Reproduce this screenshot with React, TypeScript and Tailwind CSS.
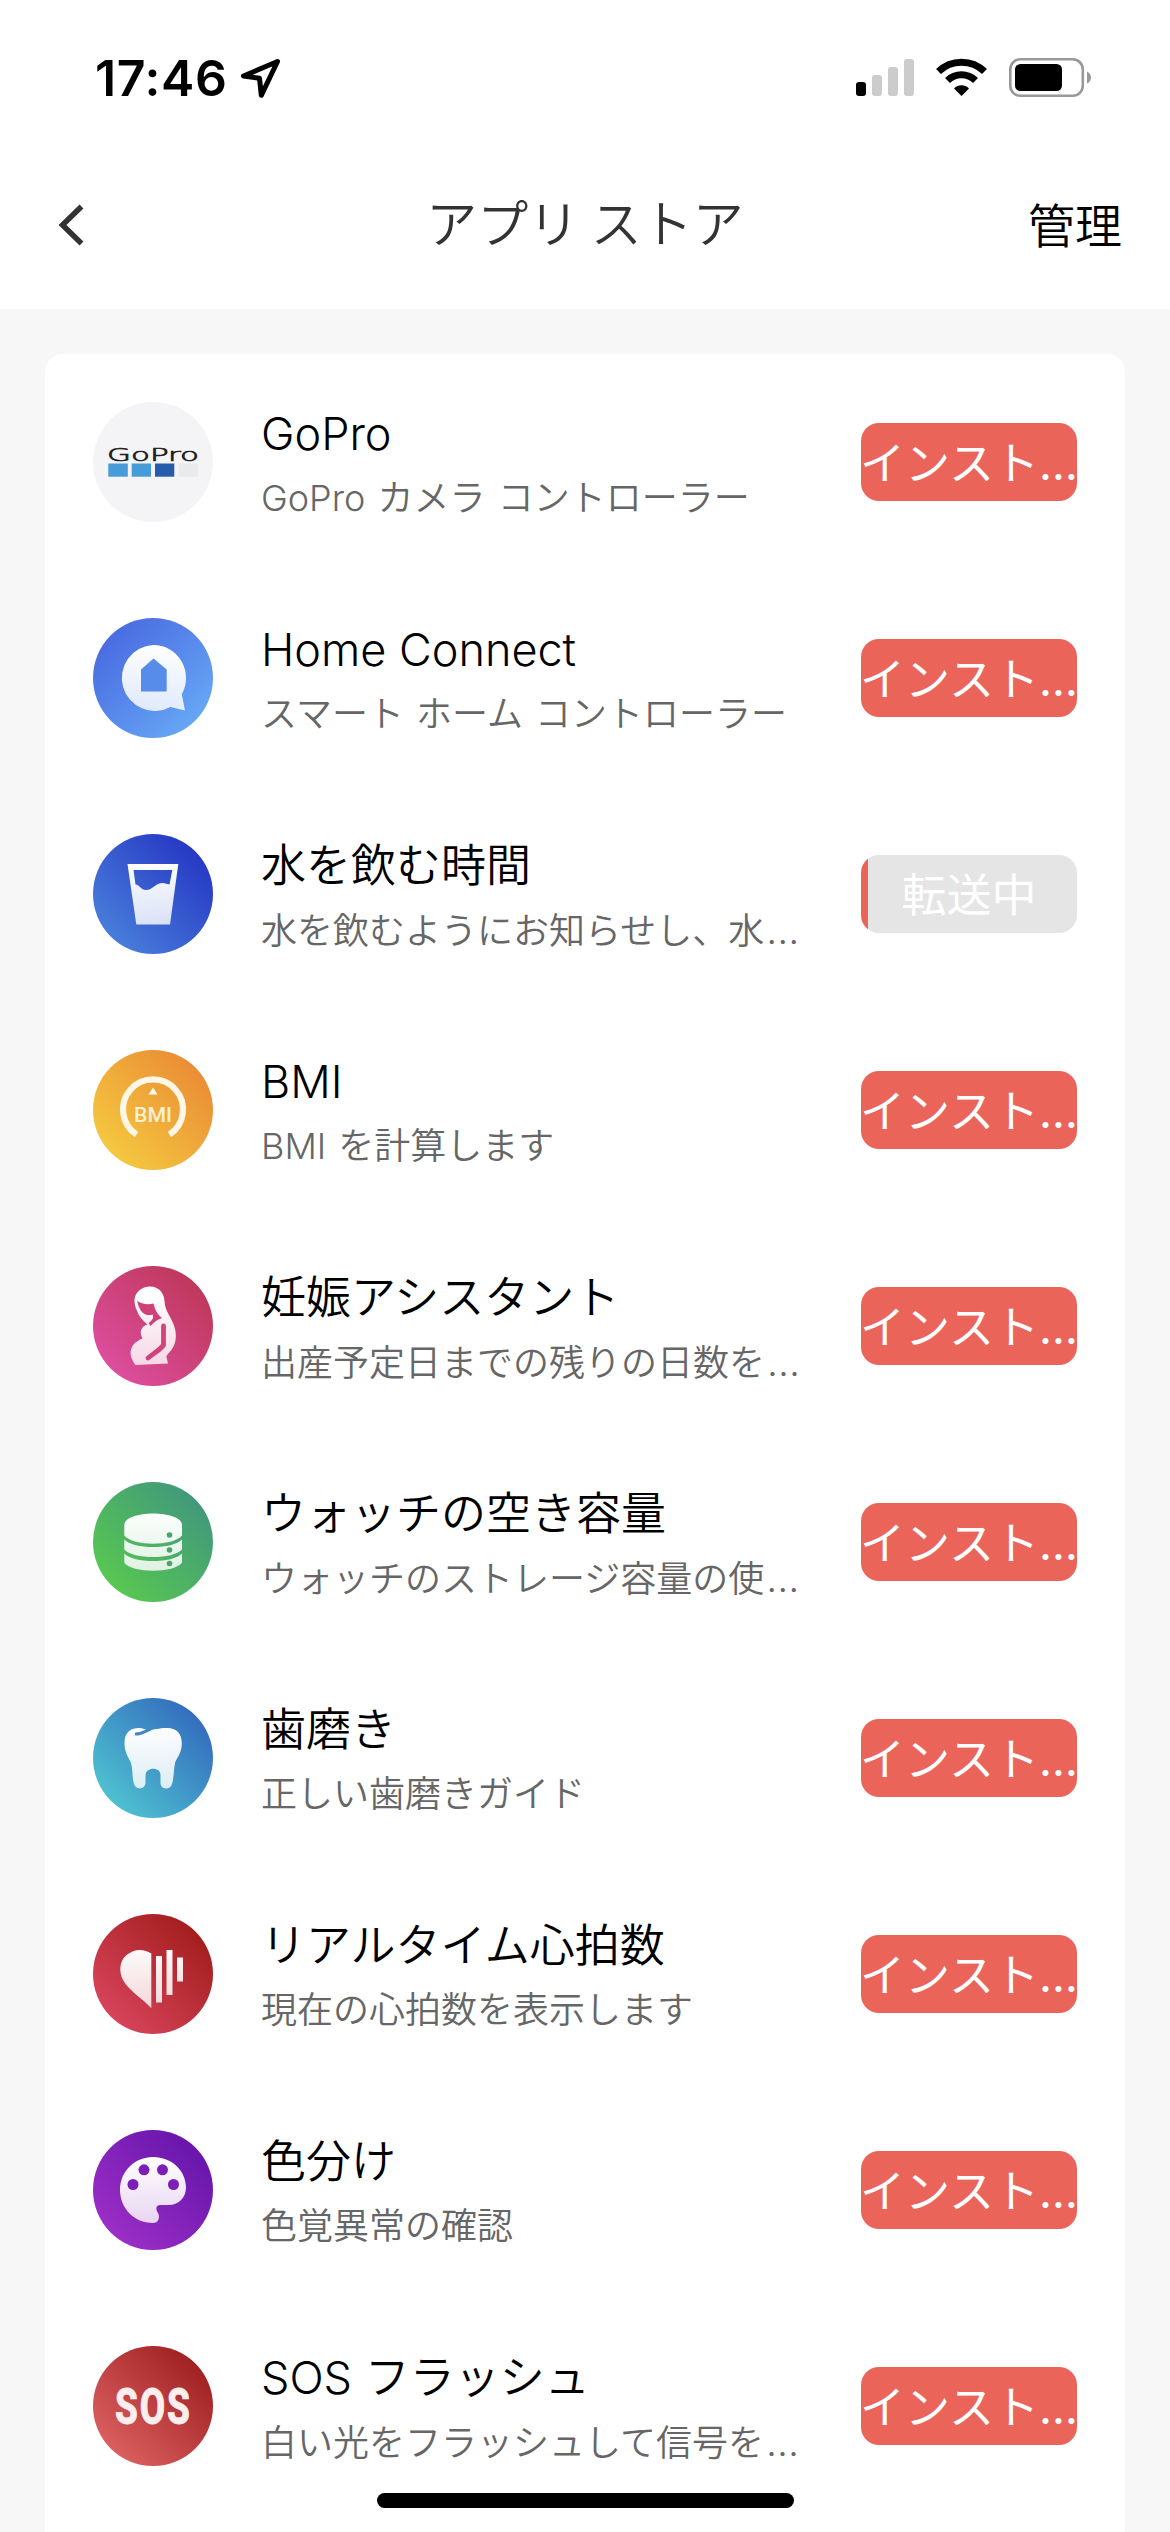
import React from "react";

type App = {
  name: string;
  desc: string;
  clipped?: boolean;
  from: string;
  to: string;
  falling?: boolean;
  glyph: React.ReactNode;
  progress?: number;
};

const W = "url(#sheen)";

const apps: App[] = [
  {
    name: "GoPro",
    desc: "GoPro カメラ コントローラー",
    from: "#f4f4f7",
    to: "#f4f4f7",
    glyph: (
      <g>
        <text
          x="14"
          y="58.700"
          textLength="92"
          lengthAdjust="spacingAndGlyphs"
          fontFamily="DejaVu Sans"
          fontSize="17.400"
          fill="#231f20"
          stroke="#231f20"
          strokeWidth="0.700"
        >
          GoPro
        </text>
        <rect x="15.300" y="61.500" width="19.500" height="13.200" fill="#469cd9" />
        <rect x="38.700" y="61.500" width="19.300" height="13.200" fill="#469cd9" />
        <rect x="62" y="61.500" width="19.300" height="13.200" fill="#265ca9" />
        <rect x="85.500" y="61.500" width="19.300" height="13.200" fill="#e9eaec" />
      </g>
    ),
  },
  {
    name: "Home Connect",
    desc: "スマート ホーム コントローラー",
    from: "#4767e0",
    to: "#68abf6",
    falling: true,
    glyph: (
      <g>
        <path fill={W} d="M60 27a33 33 0 0 1 28.800 49.200L92 92.500 77.500 89A33 33 0 1 1 60 27z" />
        <path fill="#588ceb" d="M60.500 40.500 73.700 51.500V73.500H48V51.500z" />
      </g>
    ),
  },
  {
    name: "水を飲む時間",
    desc: "水を飲むようにお知らせし、水",
    clipped: true,
    from: "#4b83dc",
    to: "#2433c3",
    progress: 3.3,
    glyph: (
      <path
        fill={W}
        fillRule="evenodd"
        d="M34.500 30H85.300L77 90.500H43.300zM40.500 36 42.500 50.500C46 50.500 48 56 53 56C60 56 62 49 70 49L76.500 50.500 79.300 36z"
      />
    ),
  },
  {
    name: "BMI",
    desc: "BMI を計算します",
    from: "#f6cd40",
    to: "#e98834",
    glyph: (
      <g>
        <path d="M43.500 84.500A30 30 0 1 1 76.500 84.500" fill="none" stroke="#fff6e6" strokeWidth="6.200" />
        <path d="M60 37.500 64.500 44.500H55.500z" fill="#fffaf0" />
        <text x="60" y="72.300" textAnchor="middle" textLength="38" lengthAdjust="spacingAndGlyphs" fontFamily="Roboto" fontWeight="500" fontSize="21" fill="#fdf0d4">
          BMI
        </text>
      </g>
    ),
  },
  {
    name: "妊娠アシスタント",
    desc: "出産予定日までの残りの日数を",
    clipped: true,
    from: "#df50a4",
    to: "#bd3655",
    glyph: (
      <g>
        <path
          fill={W}
          d="M41.500 34C42 26 49 20.500 57 20.500C66 20.500 71 27 71.500 35C72 44 76 48 80 57C84 66 84 76 79 83C76.500 87 73.500 88.500 73.500 91L75 97.500 42.500 99C38 93 36 87 39 81C41 76.500 46 74 49.500 72.500C46 66 48 60 54.500 58.500C49 54 46 50 44.500 46C43 42 41.500 40 41.500 34z"
        />
        <path fill="#d0417a" d="M44 35C48 38 55 39 60.500 37.500C62 43 63.500 48 69 52C64 53.500 61 56.500 57.500 60L55.500 57C60 54 61 51 59.500 48.500C56.500 49.500 53 49.500 49.500 46.500C46 43 45 38 44 35z" />
        <path d="M70.500 60V79C67 84 61 87 55 92" fill="none" stroke="#d0437c" strokeWidth="4.800" strokeLinecap="round" strokeLinejoin="round" />
      </g>
    ),
  },
  {
    name: "ウォッチの空き容量",
    desc: "ウォッチのストレージ容量の使",
    clipped: true,
    from: "#59cb4d",
    to: "#40957f",
    glyph: (
      <g fill={W}>
        <path d="M31.300 43C31.300 27.500 89 27.500 89 43V53.500C80 64.500 40 64.500 31.300 53.500z" />
        <path d="M31.300 57.500C40 67.500 80 67.500 89 57.500V67.500C80 77.500 40 77.500 31.300 67.500z" />
        <path d="M31.300 71.500C40 81.500 80 81.500 89 71.500V80.500C82 91.500 38 91.500 31.300 80.500z" />
        <g fill="#4ca36a">
          <circle cx="76.500" cy="53" r="2.800" />
          <circle cx="76.500" cy="68" r="2.800" />
          <circle cx="76.500" cy="81.500" r="2.800" />
        </g>
      </g>
    ),
  },
  {
    name: "歯磨き",
    desc: "正しい歯磨きガイド",
    from: "#50c8d2",
    to: "#3266bd",
    glyph: (
      <g>
        <path
          fill={W}
          d="M31.500 45C31.500 34 38 30 46 30C50 30 52 32 56 32C61 32 65 30 74 30C85 30 89 37 88.800 46C88.500 56 83 61 82 65C80.500 73 81 80 79 86C77.500 92 68.500 92 67.500 86V77C67.500 68.500 53 68.500 52.500 77V85C52 92 42.500 92 41 86C39 80 40 72 38 65C36 60 31.500 55 31.500 45z"
        />
        <path d="M42 36C48 36.500 52 33 58 31" fill="none" stroke="#3f86c6" strokeWidth="3" />
      </g>
    ),
  },
  {
    name: "リアルタイム心拍数",
    desc: "現在の心拍数を表示します",
    from: "#db4761",
    to: "#a01b18",
    glyph: (
      <g fill={W}>
        <path d="M58.300 39.500C50 34 40 35 33 41.500C26 48 26 58 30 66C36 77 49 84 58.300 94.300z" />
        <rect x="63" y="42" width="6" height="46.500" />
        <rect x="73.500" y="36" width="6" height="45" />
        <rect x="84" y="43.500" width="6" height="24" />
      </g>
    ),
  },
  {
    name: "色分け",
    desc: "色覚異常の確認",
    from: "#a030c8",
    to: "#6314aa",
    glyph: (
      <g>
        <path
          fill={W}
          d="M60 27C79 27 93 41 93 57.500C93 68 85 75 76 75H67.500C62 75 63 80 65 83C67.500 88 65 93 60 93C41 93 27 78 27 60C27 41 42 27 60 27z"
        />
        <g fill="#7c1fb6">
          <circle cx="51" cy="39.800" r="5.500" />
          <circle cx="69.500" cy="39.800" r="5.500" />
          <circle cx="40" cy="54.500" r="5.500" />
          <circle cx="80.500" cy="54.500" r="5.500" />
        </g>
      </g>
    ),
  },
  {
    name: "SOS フラッシュ",
    desc: "白い光をフラッシュして信号を",
    clipped: true,
    from: "#e06464",
    to: "#9c1c1e",
    glyph: (
      <g transform="translate(59.500 77.800) scale(0.730 1)">
        <text textAnchor="middle" letterSpacing="2.500" x="1.200" fontFamily="Roboto" fontWeight="800" fontSize="50.500" fill="#fbeeee" stroke="#fbeeee" strokeWidth="0.800">
          SOS
        </text>
      </g>
    ),
  },
];

function AppIcon({ app, id }: { app: App; id: string }) {
  return (
    <svg className="size-[120px] shrink-0" viewBox="0 0 120 120">
      <defs>
        <linearGradient id={id} x1="0.080" y1={app.falling ? "0.080" : "0.920"} x2="0.920" y2={app.falling ? "0.920" : "0.080"}>
          <stop offset="0" stopColor={app.from} />
          <stop offset="1" stopColor={app.to} />
        </linearGradient>
      </defs>
      <circle cx="60" cy="60" r="60" fill={`url(#${id})`} />
      {app.glyph}
    </svg>
  );
}

function StatusBar() {
  return (
    <div className="flex h-[141px] items-start justify-between pl-[95px] pr-[78px] pt-[58px]">
      <div className="flex items-center">
        <span className="font-['Inter'] text-[50px] font-semibold leading-[40px] tracking-[0.6px]">17:46</span>
        <svg className="ml-[12px] h-[40px] w-[42px]" viewBox="0 0 42 40" fill="none" stroke="#000" strokeWidth="5" strokeLinejoin="round">
          <path d="M37.500 3.500 3.500 18 19.500 20.300 21.300 37.300z" />
        </svg>
      </div>
      <svg className="h-[40px] w-[236px]" viewBox="0 0 236 40">
        <rect x="0" y="24" width="10" height="14" rx="3" />
        <g fill="#ccc">
          <rect x="16" y="17" width="10" height="21" rx="3" />
          <rect x="32" y="9" width="10" height="29" rx="3" />
          <rect x="48" y="1" width="10" height="37" rx="3" />
        </g>
        <g fill="none" stroke="#000" strokeWidth="7">
          <path d="M82.500 13.500A33 33 0 0 1 128.500 13.500" />
          <path d="M91.500 22.500A20 20 0 0 1 119.500 22.500" />
        </g>
        <path d="M105.500 38 98 30.500A10.500 10.500 0 0 1 113 30.500z" />
        <rect x="154.300" y="1.300" width="72.500" height="36.500" rx="10" fill="none" stroke="#999" strokeWidth="2.600" />
        <rect x="159" y="6" width="47" height="27" rx="5.500" />
        <path d="M231 13.500Q235 15.500 235 19.500T231 25.500z" fill="#999" />
      </svg>
    </div>
  );
}

export default function App() {
  return (
    <div className="relative h-[2532px] w-[1170px] overflow-hidden bg-[#f7f7f7] font-['Inter','Noto_Sans_CJK_JP',sans-serif] font-[350] text-black">
      <svg className="absolute size-0">
        <defs>
          <linearGradient id="sheen" gradientUnits="userSpaceOnUse" x1="0" y1="28" x2="0" y2="95">
            <stop offset="0" stopColor="#fff" />
            <stop offset="1" stopColor="#fff" stopOpacity="0.800" />
          </linearGradient>
        </defs>
      </svg>
      <header className="h-[309px] bg-white">
        <StatusBar />
        <nav className="grid h-[168px] grid-cols-3 items-center px-12 font-['Noto_Sans_CJK_JP',sans-serif]">
          <svg className="ml-[9px] h-[46px] w-[28px]" viewBox="0 0 28 46" fill="none" stroke="#333" strokeWidth="5.500">
            <path d="M24.500 4.500 5.500 23 24.500 41.500" />
          </svg>
          <h1 className="whitespace-nowrap pb-[8px] text-center text-[51px] leading-[72px] text-[#333]">アプリ ストア</h1>
          <span className="pb-[4px] text-right text-[47px] leading-[72px]">管理</span>
        </nav>
      </header>
      <main className="mx-[45px] mt-[45px] rounded-t-[18px] bg-white pb-12">
        {apps.map((app, i) => (
          <div key={app.name} className="flex h-[216px] items-center px-12">
            <AppIcon app={app} id={`disc-${i}`} />
            <div className="ml-12 w-[546px] shrink-0 whitespace-nowrap pt-2">
              <div className="h-[64px] text-[45px] leading-[64px]">{app.name}</div>
              <div className="h-[64px] text-[36px] leading-[64px] text-[#666] [word-spacing:2px]">
                {app.desc}
                {app.clipped && <span className="ml-[2px] text-[39px]">…</span>}
              </div>
            </div>
            {app.progress === undefined ? (
              <button className="ml-auto flex h-[78px] w-[216px] shrink-0 items-center justify-center whitespace-nowrap rounded-[18px] bg-[#eb6459] pt-[3px] text-[45px] font-normal leading-[75px] text-white">
                インスト…
              </button>
            ) : (
              <div className="ml-auto grid h-[78px] w-[216px] shrink-0 overflow-hidden rounded-[18px] bg-[#e5e5e5] text-center text-[45px] font-normal leading-[81px] text-white">
                <div className="col-start-1 row-start-1 bg-[#eb6459]" style={{ width: `${app.progress}%` }} />
                <span className="col-start-1 row-start-1">転送中</span>
              </div>
            )}
          </div>
        ))}
      </main>
      <div className="absolute bottom-[24px] left-[377px] h-[15px] w-[417px] rounded-full bg-black" />
    </div>
  );
}
